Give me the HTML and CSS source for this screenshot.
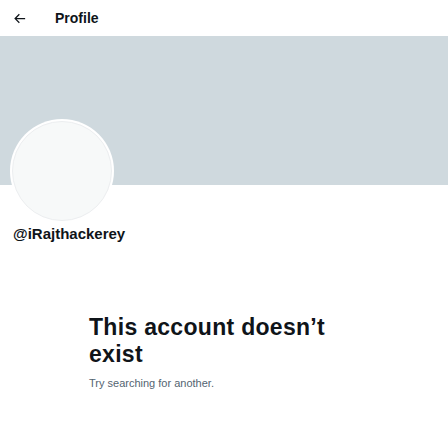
FILE: index.html
```html
<!DOCTYPE html>
<html lang="en">
<head>
<meta charset="utf-8">
<title>Profile</title>
<link rel="stylesheet" href="styles.css">
</head>
<body>
<div class="page">
  <header class="topbar">
    <span class="back" aria-label="Back">
      <svg viewBox="0 0 24 24" width="15" height="15"><path d="M7.414 13l5.043 5.04-1.414 1.42L3.586 12l7.457-7.46 1.414 1.42L7.414 11H21v2H7.414z" fill="#0f1419"/></svg>
    </span>
    <h1 class="title">Profile</h1>
  </header>
  <div class="banner"></div>
  <div class="profile">
    <div class="avatar"><div class="avatar-inner"></div></div>
    <div class="handle">@iRajthackerey</div>
  </div>
  <section class="empty">
    <h2 class="empty-title">This account doesn’t exist</h2>
    <p class="empty-sub">Try searching for another.</p>
  </section>
</div>
</body>
</html>
```

FILE: styles.css
```css
html, body {
  margin: 0;
  padding: 0;
  background: #ffffff;
}
body {
  font-family: "Liberation Sans", Arial, sans-serif;
  color: #0f1419;
}
.page {
  width: 448px;
}
.topbar {
  height: 36px;
  display: flex;
  align-items: center;
  padding-left: 12px;
  gap: 28px;
}
.back {
  display: flex;
  width: 15px;
  height: 15px;
}
.title {
  margin: 0;
  font-size: 14px;
  font-weight: 700;
  line-height: 18px;
}
.banner {
  height: 149px;
  background: #cfd9de;
}
.profile {
  padding-left: 10px;
}
.avatar {
  width: 104px;
  height: 104px;
  margin-top: -66px;
  border-radius: 50%;
  background: #ffffff;
  padding: 2px;
  box-sizing: border-box;
}
.avatar-inner {
  width: 100%;
  height: 100%;
  border-radius: 50%;
  background: #f7f9f9;
  border: 1px solid #eceef0;
  box-sizing: border-box;
}
.handle {
  margin-top: 1px;
  padding-left: 3px;
  font-size: 15px;
  font-weight: 700;
  line-height: 20px;
}
.empty {
  width: 270px;
  margin: 70px auto 0;
}
.empty-title {
  margin: 0;
  font-size: 23px;
  line-height: 27px;
  font-weight: 700;
  letter-spacing: 0.3px;
}
.empty-sub {
  margin: 8px 0 0;
  font-size: 11px;
  line-height: 14px;
  color: #536471;
}
```
